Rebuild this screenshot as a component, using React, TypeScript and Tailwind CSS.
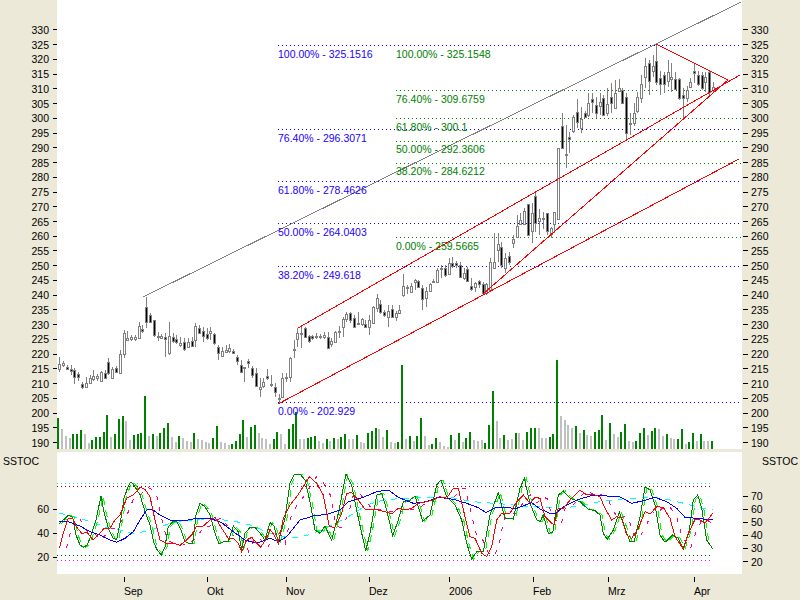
// stock chart with fibonacci levels and a stochastic panel
// data tables are read off the picture: [x, y...] in 3x units, with an origin per table

type Candle = [number, number, number, number, number, number];
type Run = { ox: number; oy: number; bars: Candle[] };

const candleRuns: Run[] = [
  {
    ox: 0,
    oy: 290,
    bars: [
      [178, 200, 245, 222, 237, 0], [190, 212, 230, 218, 224, 0], [202, 226, 240, 232, 238, 1], [214, 225, 255, 238, 243, 1],
      [224, 235, 282, 241, 260, 1], [235, 245, 272, 252, 260, 1], [247, 275, 296, 283, 290, 1], [259, 262, 292, 280, 290, 0],
      [271, 255, 280, 265, 278, 0], [281, 240, 272, 259, 268, 0], [292, 252, 272, 259, 263, 0], [304, 243, 272, 246, 272, 0],
      [316, 240, 268, 250, 263, 1], [326, 205, 256, 217, 248, 1], [337, 230, 264, 237, 263, 0], [349, 228, 250, 235, 247, 1],
      [361, 180, 250, 193, 250, 0], [373, 120, 204, 130, 193, 0], [381, 122, 152, 145, 150, 0], [393, 135, 152, 142, 146, 0],
      [405, 135, 152, 142, 147, 0], [417, 97, 145, 108, 143, 0], [427, 105, 128, 118, 124, 1], [439, 20, 115, 52, 97, 1],
      [451, 70, 100, 76, 97, 1], [463, 90, 142, 91, 134, 1], [476, 125, 152, 138, 142, 0], [485, 133, 148, 137, 143, 0],
      [497, 130, 200, 142, 148, 1], [509, 95, 195, 138, 190, 0], [521, 128, 158, 140, 153, 1], [529, 135, 162, 148, 157, 1],
      [541, 142, 170, 160, 166, 0], [553, 145, 183, 157, 178, 1], [565, 143, 175, 157, 170, 0], [577, 140, 172, 154, 167, 1],
      [587, 100, 170, 108, 150, 0], [599, 105, 130, 115, 130, 1], [610, 112, 155, 122, 138, 1], [622, 115, 150, 133, 143, 1],
      [632, 112, 150, 124, 130, 0], [644, 130, 165, 133, 158, 1], [656, 165, 210, 172, 190, 1], [668, 172, 200, 183, 198, 0],
      [680, 165, 190, 180, 185, 0], [689, 162, 188, 175, 182, 0], [701, 178, 192, 184, 189, 1], [713, 195, 225, 202, 213, 1],
      [725, 210, 250, 224, 245, 1], [733, 232, 275, 232, 233, 0], [745, 208, 235, 214, 218, 1], [757, 228, 265, 233, 255, 1],
      [769, 235, 290, 250, 287, 1], [781, 265, 322, 290, 296, 0], [791, 265, 295, 275, 289, 0], [803, 238, 270, 259, 265, 1],
    ],
  },
  {
    ox: 270,
    oy: 340,
    bars: [
      [5, 105, 140, 133, 136, 0], [17, 130, 170, 140, 157, 1], [27, 163, 190, 175, 177, 0], [37, 100, 172, 115, 170, 0],
      [49, 100, 125, 110, 112, 0], [61, 50, 125, 53, 110, 0], [73, 0, 55, 27, 29, 0],
    ],
  },
  {
    ox: 270,
    oy: 190,
    bars: [
      [83, 415, 472, 430, 447, 0], [94, 410, 475, 428, 430, 0], [106, 410, 445, 415, 442, 1], [118, 435, 460, 437, 452, 1],
      [127, 435, 450, 437, 445, 1], [139, 430, 447, 438, 440, 0], [150, 432, 447, 438, 440, 0], [163, 425, 447, 435, 442, 0],
      [175, 425, 478, 442, 475, 1], [185, 445, 470, 452, 462, 0], [197, 422, 457, 426, 455, 0], [209, 408, 445, 422, 425, 0],
      [220, 380, 440, 388, 412, 0], [230, 365, 395, 373, 388, 0], [242, 365, 400, 370, 390, 1], [254, 375, 415, 385, 412, 1],
      [266, 365, 405, 400, 403, 0], [278, 385, 407, 388, 402, 0], [287, 390, 415, 402, 410, 1], [299, 375, 435, 390, 412, 0],
      [310, 347, 402, 350, 400, 0], [322, 312, 365, 325, 355, 0], [331, 330, 372, 342, 367, 1], [343, 360, 380, 366, 375, 1],
      [355, 345, 410, 363, 380, 0], [367, 345, 385, 358, 382, 1], [379, 362, 392, 370, 380, 0], [389, 345, 370, 360, 368, 0],
      [401, 252, 322, 287, 315, 0], [413, 285, 312, 290, 295, 0], [425, 280, 310, 287, 307, 0], [437, 268, 300, 271, 275, 0],
      [446, 270, 295, 272, 290, 1], [458, 285, 360, 295, 328, 1], [470, 290, 350, 304, 323, 0], [482, 280, 305, 283, 302, 0],
      [491, 268, 280, 272, 276, 0], [503, 235, 280, 240, 277, 0], [515, 225, 265, 233, 237, 1], [527, 225, 262, 233, 256, 1],
      [539, 205, 255, 220, 252, 0], [548, 200, 235, 218, 227, 1], [560, 212, 235, 218, 225, 1], [572, 215, 265, 225, 262, 1],
      [584, 235, 270, 250, 265, 0], [593, 232, 275, 237, 272, 1], [605, 265, 302, 288, 296, 1], [617, 275, 305, 278, 292, 0],
      [629, 270, 295, 272, 282, 1], [641, 275, 312, 282, 310, 1], [650, 280, 315, 283, 310, 0], [662, 205, 305, 217, 300, 0],
      [674, 130, 235, 217, 235, 0], [686, 130, 215, 162, 180, 0], [695, 155, 235, 170, 225, 1], [707, 190, 250, 205, 235, 0],
      [719, 185, 225, 197, 215, 1],
    ],
  },
  {
    ox: 490,
    oy: 100,
    bars: [
      [70, 405, 445, 418, 430, 0], [82, 345, 412, 378, 412, 0], [92, 338, 375, 361, 373, 0], [104, 325, 372, 332, 372, 0],
      [115, 312, 405, 312, 405, 1], [127, 310, 430, 340, 392, 0], [136, 280, 395, 288, 368, 1], [148, 328, 405, 355, 362, 0],
      [160, 335, 388, 355, 357, 0], [172, 338, 405, 340, 392, 1], [184, 380, 415, 385, 402, 0], [194, 335, 400, 337, 372, 0],
      [205, 145, 360, 145, 358, 0],
    ],
  },
  {
    ox: 530,
    oy: 0,
    bars: [
      [97, 338, 445, 377, 443, 1], [109, 375, 505, 462, 464, 0], [118, 395, 460, 410, 418, 1], [130, 345, 400, 352, 392, 0],
      [142, 297, 385, 335, 367, 1], [154, 320, 400, 357, 385, 0], [166, 332, 355, 338, 352, 1], [175, 280, 350, 310, 345, 0],
      [187, 280, 340, 298, 307, 1], [199, 290, 355, 315, 340, 1], [211, 280, 345, 305, 317, 0], [220, 285, 348, 293, 345, 1],
      [232, 265, 348, 313, 340, 0], [244, 250, 340, 290, 310, 1], [256, 240, 325, 280, 323, 0], [268, 238, 275, 265, 272, 0],
      [277, 265, 310, 270, 308, 1], [289, 280, 420, 290, 398, 1], [301, 340, 405, 370, 372, 0], [313, 310, 378, 340, 368, 0],
      [322, 275, 340, 292, 332, 0], [334, 225, 310, 252, 295, 0], [346, 175, 265, 198, 230, 0], [358, 180, 285, 190, 243, 1],
      [370, 165, 230, 198, 212, 0], [379, 133, 255, 183, 245, 1], [391, 212, 285, 235, 253, 1], [403, 215, 280, 226, 252, 1],
      [415, 180, 260, 217, 243, 0], [424, 190, 275, 231, 238, 0], [436, 215, 270, 237, 268, 1], [448, 235, 300, 238, 295, 1],
      [460, 265, 360, 286, 295, 1], [472, 258, 305, 270, 295, 0], [481, 235, 265, 247, 260, 0], [493, 188, 250, 213, 220, 1],
      [505, 212, 257, 226, 253, 1], [517, 215, 270, 226, 265, 1], [526, 215, 275, 230, 245, 0], [538, 212, 285, 217, 275, 1],
      [550, 245, 275, 262, 270, 0],
    ],
  },
];

// [x, top, up]
const volumeRuns: { ox: number; oy: number; bars: number[][] }[] = [
  {
    ox: 0,
    oy: 290,
    bars: [
      [173, 385, 1], [185, 417, 0], [197, 438, 0], [209, 444, 0], [219, 433, 1], [230, 433, 1], [242, 420, 1], [254, 432, 0],
      [266, 459, 0], [276, 451, 1], [288, 441, 1], [299, 441, 1], [311, 426, 1], [321, 375, 1], [333, 441, 0], [345, 432, 1],
      [356, 387, 1], [368, 378, 1], [379, 393, 0], [390, 450, 0], [402, 435, 1], [414, 432, 1], [423, 429, 1], [435, 318, 1],
      [447, 438, 0], [459, 432, 1], [471, 438, 0], [480, 429, 1], [492, 414, 1], [504, 399, 1], [516, 441, 0], [527, 456, 0],
      [537, 438, 1], [549, 444, 0], [561, 453, 0], [573, 456, 0], [582, 429, 1], [594, 447, 0], [606, 450, 0], [618, 456, 0],
      [628, 459, 0], [640, 444, 1], [651, 408, 1], [663, 456, 0], [675, 459, 0], [686, 465, 0], [696, 462, 1], [708, 453, 1],
      [720, 432, 1], [729, 390, 1], [741, 441, 0], [753, 411, 1], [765, 405, 1], [777, 429, 0], [787, 444, 0], [799, 447, 0],
    ],
  },
  {
    ox: 270,
    oy: 340,
    bars: [
      [0, 312, 0], [11, 297, 1], [21, 276, 1], [33, 282, 0], [45, 312, 0], [57, 267, 1], [69, 252, 1], [78, 216, 1], [90, 297, 0],
      [102, 297, 0], [114, 294, 1], [123, 291, 1], [135, 288, 1], [147, 303, 0], [159, 309, 0], [171, 297, 1], [180, 303, 0],
      [192, 294, 1], [204, 297, 0], [214, 291, 1], [225, 282, 1], [237, 297, 0], [249, 297, 0], [261, 285, 1], [273, 306, 0],
      [282, 309, 0], [294, 279, 1], [306, 273, 1], [318, 264, 1], [327, 267, 0], [339, 291, 0], [351, 270, 1], [363, 306, 0],
      [375, 309, 0], [384, 306, 1], [396, 75, 1], [408, 297, 0], [420, 288, 1], [432, 303, 0], [441, 288, 1], [453, 234, 1],
      [465, 288, 0], [477, 315, 0], [486, 312, 1], [498, 294, 1], [510, 306, 0], [522, 318, 0], [534, 321, 0], [543, 285, 1],
      [555, 300, 0], [567, 279, 1], [579, 306, 0], [588, 294, 1], [600, 276, 1], [612, 301, 0], [624, 303, 0], [636, 301, 0],
      [645, 309, 1], [657, 255, 1], [669, 153, 1], [681, 243, 0], [690, 294, 0], [702, 285, 1], [714, 300, 0], [726, 297, 0],
      [738, 279, 1], [747, 279, 0], [759, 300, 0], [771, 276, 1], [783, 264, 1], [795, 264, 1], [807, 264, 0],
    ],
  },
  {
    ox: 530,
    oy: 340,
    bars: [
      [36, 294, 0], [48, 294, 0], [60, 291, 1], [69, 282, 1], [81, 60, 1], [93, 228, 0], [105, 240, 0], [114, 255, 0], [126, 264, 0],
      [138, 258, 1], [150, 279, 0], [162, 270, 1], [171, 285, 0], [183, 288, 0], [195, 276, 1], [207, 270, 1], [216, 225, 1],
      [228, 300, 0], [240, 249, 1], [252, 282, 0], [264, 291, 0], [273, 276, 1], [285, 252, 1], [297, 303, 0], [309, 306, 0],
      [318, 303, 1], [330, 279, 1], [342, 264, 1], [354, 285, 0], [366, 273, 1], [375, 264, 1], [387, 267, 0], [399, 288, 0],
      [411, 282, 1], [423, 294, 0], [432, 297, 0], [444, 297, 1], [456, 267, 1], [468, 312, 0], [477, 306, 1], [489, 279, 1],
      [501, 303, 0], [513, 282, 1], [522, 303, 0], [534, 303, 0], [546, 303, 1],
    ],
  },
];

// stochastic lines, one list of x,y pairs per zoomed piece (ox 0, 270, 530, oy 440)
const toPoints = (pieces: [number, number[]][]) => {
  const pts: [number, number][] = [];
  pieces.forEach(([ox, list]) => {
    for (let i = 0; i < list.length; i += 2) {
      pts.push([ox + list[i] / 3, 440 + list[i + 1] / 3]);
    }
  });
  return pts;
};

const fastLine = toPoints([
  [0, [178, 252, 190, 240, 205, 226, 218, 232, 228, 285, 240, 315, 250, 322, 262, 315, 275, 280, 288, 240, 303, 168, 312, 215, 325, 265, 340, 295, 350, 300, 362, 240, 372, 175, 384, 140, 393, 125, 405, 140, 420, 165, 435, 215, 450, 255, 462, 310, 472, 330, 483, 345, 495, 320, 505, 260, 518, 245, 530, 245, 545, 275, 555, 305, 565, 310, 578, 312, 588, 225, 600, 190, 615, 200, 630, 225, 645, 280, 657, 312, 670, 305, 685, 305, 700, 258, 715, 275, 725, 330, 735, 280, 750, 262, 765, 262, 780, 280, 795, 300]],
  [270, [0, 248, 12, 258, 25, 305, 45, 235, 60, 130, 72, 105, 90, 102, 105, 120, 120, 185, 135, 270, 150, 280, 165, 258, 185, 302, 205, 220, 228, 103, 245, 135, 262, 220, 287, 333, 300, 280, 320, 165, 335, 160, 350, 210, 368, 288, 385, 240, 400, 185, 420, 180, 435, 168, 458, 243, 480, 225, 500, 135, 513, 120, 530, 170, 555, 195, 575, 240, 590, 310, 605, 358, 620, 335, 640, 335, 660, 225, 685, 158, 705, 235, 730, 237, 750, 145, 763, 115, 780, 190, 800, 240]],
  [530, [30, 245, 40, 225, 55, 280, 68, 278, 85, 165, 100, 153, 120, 175, 150, 185, 175, 208, 195, 212, 210, 225, 220, 280, 232, 298, 250, 270, 268, 215, 285, 265, 300, 305, 312, 306, 330, 230, 345, 140, 360, 150, 375, 195, 390, 285, 405, 307, 428, 285, 445, 295, 460, 325, 478, 270, 490, 180, 503, 165, 515, 205, 530, 300, 548, 326]],
]);

const redLine = toPoints([
  [0, [178, 325, 190, 280, 205, 235, 218, 235, 230, 262, 245, 280, 262, 278, 280, 300, 300, 280, 312, 265, 330, 265, 345, 240, 360, 225, 380, 175, 400, 165, 420, 142, 435, 148, 450, 170, 465, 240, 480, 300, 500, 310, 520, 310, 540, 316, 560, 300, 575, 285, 590, 258, 610, 258, 630, 240, 645, 232, 665, 265, 685, 295, 700, 295, 715, 310, 725, 335, 740, 300, 755, 292, 770, 310, 782, 322, 800, 295]],
  [270, [0, 268, 12, 285, 25, 310, 40, 235, 60, 195, 80, 170, 100, 140, 118, 110, 140, 130, 160, 165, 178, 260, 195, 262, 215, 220, 230, 160, 245, 158, 265, 180, 285, 208, 305, 208, 325, 210, 345, 215, 365, 222, 385, 205, 405, 210, 425, 205, 445, 190, 470, 185, 490, 180, 510, 170, 530, 175, 550, 145, 565, 145, 585, 230, 600, 290, 615, 295, 635, 340, 650, 350, 665, 320, 680, 240, 695, 220, 720, 220, 740, 185, 760, 165, 780, 190, 795, 172]],
  [530, [30, 175, 45, 230, 60, 245, 72, 255, 85, 205, 100, 205, 125, 175, 150, 150, 170, 165, 190, 163, 210, 170, 225, 205, 245, 240, 260, 230, 275, 235, 290, 285, 305, 295, 325, 265, 345, 215, 360, 222, 380, 200, 400, 202, 420, 235, 435, 290, 460, 327, 478, 275, 495, 238, 510, 240, 525, 250, 548, 220]],
]);

const blueLine = toPoints([
  [0, [178, 245, 205, 245, 240, 258, 270, 275, 300, 285, 325, 298, 350, 307, 375, 295, 400, 275, 420, 240, 440, 210, 455, 207, 480, 225, 510, 240, 550, 243, 590, 235, 630, 235, 665, 248, 700, 275, 735, 300, 770, 310]],
  [270, [0, 295, 25, 305, 50, 290, 90, 240, 130, 228, 175, 222, 210, 210, 235, 185, 280, 172, 320, 155, 355, 150, 385, 172, 430, 190, 470, 185, 505, 172, 550, 178, 590, 190, 625, 203, 648, 218, 680, 202, 740, 205, 785, 188]],
  [530, [30, 207, 60, 220, 75, 222, 100, 200, 140, 180, 190, 165, 230, 168, 265, 168, 305, 190, 340, 182, 375, 172, 410, 185, 440, 205, 465, 232, 500, 235, 548, 240]],
]);

const cyanLine = toPoints([
  [0, [178, 220, 205, 225, 240, 235, 270, 245, 300, 255, 325, 265, 360, 270, 400, 282, 430, 275, 470, 265, 510, 250, 560, 243, 600, 237, 650, 238, 700, 243, 750, 255]],
  [270, [0, 280, 40, 290, 90, 292, 130, 280, 175, 260, 235, 230, 290, 195, 340, 180, 400, 175, 470, 172, 540, 172, 610, 185, 700, 192, 780, 200]],
  [530, [30, 200, 100, 205, 160, 195, 210, 185, 260, 178, 310, 175, 370, 172, 420, 180, 470, 192, 515, 205, 548, 210]],
]);

// signal lines trail the main ones by a couple of bars
const shifted = (pts: [number, number][], dx: number) =>
  pts.map(([x, y]) => [x + dx, y] as [number, number]).filter(([x]) => x <= 713);

const pointsAttr = (pts: [number, number][]) => pts.map(([x, y]) => `${x.toFixed(1)},${y.toFixed(1)}`).join(" ");

const blueLevels = [45, 129, 181, 223, 266, 402];
const greenLevels = [90, 118, 141, 163, 237]; // the 100% level sits under the blue one

const blueLabels: [string, number][] = [
  ["100.00% - 325.1516", 54],
  ["76.40% - 296.3071", 138],
  ["61.80% - 278.4626", 190],
  ["50.00% - 264.0403", 232],
  ["38.20% - 249.618", 275],
  ["0.00% - 202.929", 411],
];

const greenLabels: [string, number][] = [
  ["100.00% - 325.1548", 54],
  ["76.40% - 309.6759", 99],
  ["61.80% - 300.1", 127],
  ["50.00% - 292.3606", 149],
  ["38.20% - 284.6212", 171],
  ["0.00% - 259.5665", 246],
];

const priceTicks: number[] = [];
for (let p = 330; p >= 190; p -= 5) priceTicks.push(p);

const months: [string, string][] = [
  ["Sep", "w-[83px]"],
  ["Okt", "w-[79px]"],
  ["Nov", "w-[83px]"],
  ["Dez", "w-[80px]"],
  ["2006", "w-[84px]"],
  ["Feb", "w-[75px]"],
  ["Mrz", "w-[86px]"],
  ["Apr", "w-[40px]"],
];

function LeftTick({ label, className }: { label: number; className: string }) {
  return (
    <div className={`flex items-center justify-end ${className}`}>
      <span>{label}</span>
      <div className="w-1 h-px bg-black ml-1" />
    </div>
  );
}

function RightTick({ label, className }: { label: number; className: string }) {
  return (
    <div className={`flex items-center pl-px ${className}`}>
      <div className="w-[5px] h-px bg-black mr-[3px]" />
      <span>{label}</span>
    </div>
  );
}

function PriceChart() {
  return (
    <svg className="block w-[685px] h-[449px]" viewBox="57 0 685 449" shapeRendering="crispEdges">
      {greenLevels.map((y) => (
        <line key={y} x1={396} x2={742} y1={y + 0.5} y2={y + 0.5} stroke="#008000" strokeDasharray="1 3" />
      ))}
      {blueLevels.map((y) => (
        <line key={y} x1={278} x2={742} y1={y + 0.5} y2={y + 0.5} stroke="#0000ff" strokeDasharray="1 3" />
      ))}

      {volumeRuns.map((run) =>
        run.bars.map(([x, top, up]) => {
          const y = Math.round(run.oy + top / 3);
          return (
            <rect
              key={`${run.ox}-${x}`}
              x={Math.round(run.ox + x / 3 - 1)}
              y={y}
              width={2}
              height={449 - y}
              fill={up ? "#008000" : "#c0c0c0"}
            />
          );
        })
      )}

      {candleRuns.map((run) =>
        run.bars.map(([x, top, bot, btop, bbot, black]) => {
          const cx = Math.round(run.ox + x / 3 - 0.5);
          const bodyTop = Math.round(run.oy + btop / 3);
          const bodyBot = Math.round(run.oy + bbot / 3);
          return (
            <g key={`${run.ox}-${x}`}>
              <line
                x1={cx + 0.5}
                x2={cx + 0.5}
                y1={run.oy + top / 3}
                y2={run.oy + bot / 3}
                stroke="#808080"
              />
              <rect
                x={cx - 0.5}
                y={bodyTop + 0.5}
                width={2}
                height={Math.max(bodyBot - bodyTop, 1)}
                fill={black ? "#000000" : "#ffffff"}
                stroke="#808080"
              />
            </g>
          );
        })
      )}

      <line x1={143} y1={297} x2={741} y2={2} stroke="#808080" />
      <g stroke="#ff0000" fill="none">
        <line x1={298} y1={328} x2={740} y2={75} />
        <line x1={278} y1={404} x2={739} y2={159} />
        <line x1={483} y1={294} x2={728} y2={80} />
        <line x1={656} y1={44} x2={728} y2={80} />
      </g>

      <g className="text-[10.5px]">
        {blueLabels.map(([text, y]) => (
          <text key={text} x={278} y={y + 4} fill="#2200ff">
            {text}
          </text>
        ))}
        {greenLabels.map(([text, y]) => (
          <text key={text} x={396} y={y + 4} fill="#008000">
            {text}
          </text>
        ))}
      </g>
    </svg>
  );
}

function StochChart() {
  return (
    <svg className="block w-[685px] h-[122px]" viewBox="57 452 685 122" shapeRendering="crispEdges" fill="none">
      <line x1={57} x2={713} y1={483.5} y2={483.5} stroke="#33cccc" strokeDasharray="1 3" />
      <line x1={57} x2={713} y1={486.5} y2={486.5} stroke="#800000" strokeDasharray="1 3" />
      <line x1={57} x2={713} y1={555.5} y2={555.5} stroke="#006000" strokeDasharray="1 3" />
      <line x1={57} x2={713} y1={560.5} y2={560.5} stroke="#ff00ff" strokeDasharray="1 3" />

      <polyline points={pointsAttr(cyanLine)} stroke="#00ffff" strokeDasharray="6 6" />
      <polyline points={pointsAttr(shifted(redLine, 7))} stroke="#ff0080" strokeDasharray="4 8" />
      <polyline points={pointsAttr(shifted(fastLine, 2))} stroke="#00ff00" strokeDasharray="7 5" />
      <polyline points={pointsAttr(fastLine)} stroke="#008000" />
      <polyline points={pointsAttr(blueLine)} stroke="#0000ff" />
      <polyline points={pointsAttr(redLine)} stroke="#ff0000" />
    </svg>
  );
}

export default function App() {
  return (
    <div className="w-[800px] h-[600px] overflow-hidden bg-[#ece9d8] text-black text-[10.5px] leading-3 font-['Liberation_Sans',Arial,sans-serif]">
      <div className="flex h-[449px]">
        <div className="w-[57px] pt-[22.6px]">
          {priceTicks.map((p) => (
            <LeftTick key={p} label={p} className="h-[14.74px]" />
          ))}
        </div>
        <div className="w-[685px] bg-white">
          <PriceChart />
        </div>
        <div className="w-[58px] pt-[22.6px]">
          {priceTicks.map((p) => (
            <RightTick key={p} label={p} className="h-[14.74px]" />
          ))}
        </div>
      </div>

      <div className="flex h-[122px] mt-[3px]">
        <div className="w-[57px] pt-[3px]">
          <div className="pl-[3px] h-3">SSTOC</div>
          <div className="mt-[30px]">
            {[60, 40, 20].map((p) => (
              <LeftTick key={p} label={p} className="h-6" />
            ))}
          </div>
        </div>
        <div className="w-[685px] bg-white">
          <StochChart />
        </div>
        <div className="w-[58px] pt-[3px]">
          <div className="pl-5 h-3">SSTOC</div>
          <div className="mt-[22.5px]">
            {[70, 60, 50, 40, 30, 20].map((p) => (
              <RightTick key={p} label={p} className="h-[13.1px]" />
            ))}
          </div>
        </div>
      </div>

      <div className="flex pl-[124px] pt-[3px]">
        {months.map(([name, width]) => (
          <div key={name} className={width}>
            <div className="w-px h-[5px] bg-black" />
            <div className="mt-[3px]">{name}</div>
          </div>
        ))}
      </div>
    </div>
  );
}
